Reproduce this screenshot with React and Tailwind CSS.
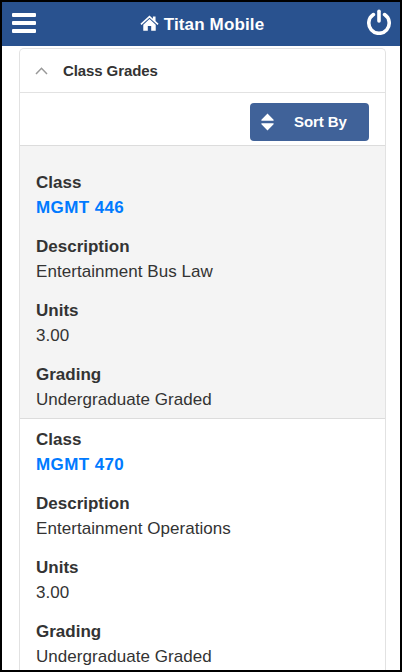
const CLASSES = [
  { code: "MGMT 446", description: "Entertainment Bus Law", units: "3.00", grading: "Undergraduate Graded" },
  { code: "MGMT 470", description: "Entertainment Operations", units: "3.00", grading: "Undergraduate Graded" },
];

function HomeIcon() {
  return (
    <svg viewBox="0 0 20 18" className="mb-[2px] h-[17px] w-[19px]" fill="currentColor">
      {/* roof with chimney */}
      <path d="M10 .6 13.6 3.9V1.6H16.4V6.4L19.6 9.3 18.5 10.5 10 2.9 1.5 10.5.4 9.3Z" />
      {/* walls and door */}
      <path d="M10 4.3 16.6 10.2V16.8H11.8V11.6H8.2V16.8H3.4V10.2Z" />
    </svg>
  );
}

function Field({ label, children }) {
  return (
    <div className="h-16">
      <dt className="h-[25.5px] font-bold">{label}</dt>
      <dd className="h-[25.5px] tracking-[0.05px]">{children}</dd>
    </div>
  );
}

function ClassRow({ item, first }) {
  return (
    <li
      className={
        first
          ? "border-b border-[#dcdcdc] bg-[#f4f4f4] px-4 pt-[23.5px] h-[273px]"
          : "border-b border-[#dcdcdc] bg-white px-4 pt-[7.5px] h-[257px]"
      }
    >
      <dl className="text-[17px] leading-[25.5px]">
        <Field label="Class">
          <a href="#" className="font-bold tracking-[0.4px] text-[#007aff]">{item.code}</a>
        </Field>
        <Field label="Description">{item.description}</Field>
        <Field label="Units">{item.units}</Field>
        <Field label="Grading">{item.grading}</Field>
      </dl>
    </li>
  );
}

export default function App() {
  return (
    <div className="flex h-[672px] w-[402px] flex-col overflow-hidden border-2 border-black bg-white font-['Liberation_Sans',Arial,sans-serif] text-[#333]">
      {/* Top bar */}
      <header className="flex h-11 shrink-0 items-center justify-between bg-[#29528f] pr-2 pl-[10px] text-white">
        <button aria-label="Menu" className="mb-[2px] flex h-5 w-6 flex-col justify-between">
          <span className="h-1 w-6 rounded-[1px] bg-white" />
          <span className="h-1 w-6 rounded-[1px] bg-white" />
          <span className="h-1 w-6 rounded-[1px] bg-white" />
        </button>
        <h1 className="flex items-center gap-[5px] pl-[2px] text-[17px] font-bold">
          <HomeIcon />
          <span className="pt-px tracking-[0.15px]">Titan Mobile</span>
        </h1>
        <button aria-label="Sign out" className="mb-[4px]">
          <svg viewBox="0 0 26 26" className="size-[26px]" fill="none" stroke="currentColor" strokeWidth="3.6" strokeLinecap="round">
            <path d="M13 2.2V12" />
            <path d="M7.4 5.6A10.2 10.2 0 1 0 18.6 5.6" />
          </svg>
        </button>
      </header>

      {/* Grades panel */}
      <main className="mt-0.5 mr-[14px] ml-[17px] flex min-h-0 flex-1 flex-col overflow-hidden rounded-t-[5px] border border-b-0 border-[#e2e2e2]">
        <div className="flex h-11 shrink-0 items-center border-b border-[#e2e2e2] pl-[15px]">
          <svg viewBox="0 0 13 8" className="h-2 w-[13px]" fill="none" stroke="#999" strokeWidth="1.5">
            <path d="M1 7 6.5 1.3 12 7" />
          </svg>
          <h2 className="ml-[15px] pt-px text-[15px] font-bold tracking-[-0.1px]">Class Grades</h2>
        </div>
        <div className="flex h-[53px] shrink-0 justify-end border-b border-[#dcdcdc] pt-[10px] pr-4">
          <button className="flex h-[38px] w-[119px] items-center rounded-[4px] bg-[#406299] pl-[11px] text-[15px] font-bold text-white">
            <svg viewBox="0 0 13 18" className="h-[18px] w-[13px]" fill="currentColor">
              <path d="M6.5.5 12.6 6.7V7.8H.4V6.7ZM.4 10.2H12.6V11.3L6.5 17.5.4 11.3Z" />
            </svg>
            <span className="ml-5 tracking-[-0.1px]">Sort By</span>
          </button>
        </div>
        <ul>
          {CLASSES.map((c, i) => (
            <ClassRow key={c.code} item={c} first={i === 0} />
          ))}
        </ul>
      </main>
    </div>
  );
}
